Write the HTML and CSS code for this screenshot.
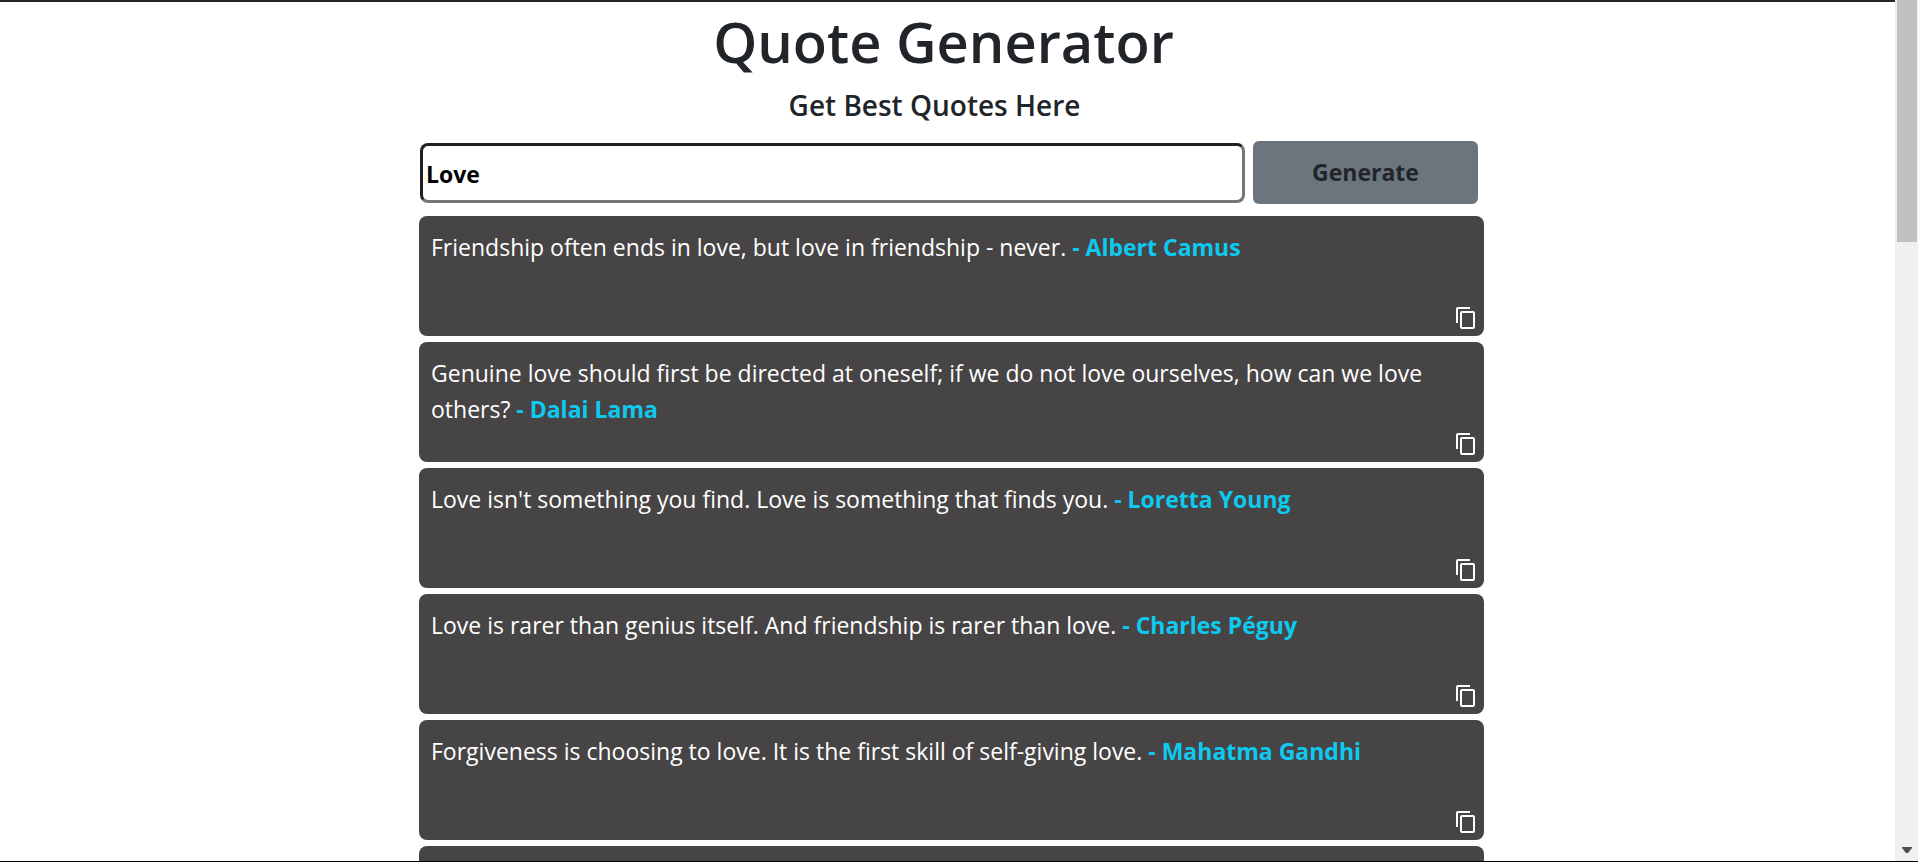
FILE: index.html
```html
<!DOCTYPE html>
<html lang="en">
<head>
<meta charset="utf-8">
<meta name="viewport" content="width=device-width, initial-scale=1">
<title>Quote Generator</title>
<link rel="stylesheet" href="styles.css">
</head>
<body>
<svg class="sprite" aria-hidden="true">
  <symbol id="copy" viewBox="0 0 24 24"><path fill="currentColor" d="M16 1H4c-1.100 0-2 .9-2 2v14h2V3h12V1zm3 4H8c-1.100 0-2 .9-2 2v14c0 1.100.9 2 2 2h11c1.100 0 2-.9 2-2V7c0-1.100-.9-2-2-2zm0 16H8V7h11v14z"/></symbol>
</svg>
<main class="page">
  <div class="container">
    <header class="heading">
      <h1 class="title">Quote Generator</h1>
      <p class="subtitle">Get Best Quotes Here</p>
    </header>
    <form class="search">
      <input class="search-input" type="text" value="Love" aria-label="Topic">
      <button class="search-button" type="button">Generate</button>
    </form>
    <section class="quotes">
      <article class="quote"><p class="quote-text">Friendship often ends in love, but love in friendship - never. <b class="author">- Albert Camus</b></p><button class="copy" type="button" aria-label="Copy quote"><svg class="copy-icon"><use href="#copy"/></svg></button></article>
      <article class="quote"><p class="quote-text">Genuine love should first be directed at oneself; if we do not love ourselves, how can we love others? <b class="author">- Dalai Lama</b></p><button class="copy" type="button" aria-label="Copy quote"><svg class="copy-icon"><use href="#copy"/></svg></button></article>
      <article class="quote"><p class="quote-text">Love isn't something you find. Love is something that finds you. <b class="author">- Loretta Young</b></p><button class="copy" type="button" aria-label="Copy quote"><svg class="copy-icon"><use href="#copy"/></svg></button></article>
      <article class="quote"><p class="quote-text">Love is rarer than genius itself. And friendship is rarer than love. <b class="author">- Charles Péguy</b></p><button class="copy" type="button" aria-label="Copy quote"><svg class="copy-icon"><use href="#copy"/></svg></button></article>
      <article class="quote"><p class="quote-text">Forgiveness is choosing to love. It is the first skill of self-giving love. <b class="author">- Mahatma Gandhi</b></p><button class="copy" type="button" aria-label="Copy quote"><svg class="copy-icon"><use href="#copy"/></svg></button></article>
      <article class="quote"></article>
    </section>
  </div>
</main>
<div class="scrollbar" aria-hidden="true">
  <div class="thumb"></div>
  <svg class="arrow" viewBox="0 0 10 6"><path fill="#505050" d="M0 0h10v1L6 6H4L0 1z"/></svg>
</div>
</body>
</html>
```
FILE: styles.css
```css
* {
  box-sizing: border-box;
}

body {
  display: flex;
  height: 100vh;
  margin: 0;
  overflow: hidden;
  border-bottom: 1px solid #000;
  background: #fff;
  color: #212529;
  font-family: "Segoe UI", "Open Sans", "Noto Sans", sans-serif;
  font-size: 23px;
  line-height: 36px;
}

.sprite {
  display: none;
}

.page {
  flex: 1;
  min-width: 0;
  overflow: hidden;
  padding-left: 8px;
  border-top: 2px solid #212529;
}

.container {
  max-width: 1065px;
  margin: 0 auto;
}

.heading {
  text-align: center;
}

.title {
  margin: 0;
  padding: 3px 16px 0 0;
  font-size: 56px;
  font-weight: 600;
  line-height: 72px;
}

.subtitle {
  margin: 8px 0 0;
  padding-right: 34px;
  font-size: 28px;
  font-weight: 600;
  line-height: 40px;
}

.search {
  display: flex;
  align-items: center;
  gap: 8px;
  margin: 16px 6px 12px 1px;
}

.search-input {
  flex: 1;
  min-width: 0;
  height: 60px;
  padding: 2px 4px 0 3px;
  border: 3px solid;
  border-color: #212121 #767676 #767676 #212121;
  border-radius: 8px;
  background: #fff;
  color: #000;
  font: inherit;
  font-weight: 700;
}

.search-button {
  width: 225px;
  height: 63px;
  padding: 0 0 2px;
  border: 0;
  border-radius: 6px;
  background: #6c757d;
  color: #212529;
  font: inherit;
  font-weight: 700;
}

.quotes {
  display: flex;
  flex-direction: column;
  gap: 6px;
}

.quote {
  position: relative;
  min-height: 120px;
  padding: 13px 12px;
  border-radius: 8px;
  background: #474445;
  color: #fff;
}

.quote-text {
  margin: 0;
}

.author {
  color: #0dcaf0;
  font-weight: 700;
}

.copy {
  position: absolute;
  right: 6px;
  bottom: 6px;
  padding: 0;
  border: 0;
  background: none;
  color: #fff;
  line-height: 0;
}

.copy-icon {
  width: 24px;
  height: 24px;
}

.scrollbar {
  display: flex;
  flex-direction: column;
  align-items: center;
  justify-content: space-between;
  width: 23px;
  padding: 0 1px 8px 2px;
  background: #f0f0f0;
}

.thumb {
  width: 100%;
  height: 242px;
  background: #c1c1c1;
}

.arrow {
  width: 10px;
  height: 6px;
}
```
